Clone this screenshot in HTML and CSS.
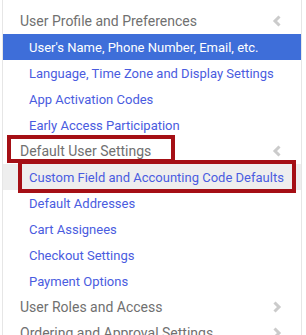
FILE: index.html
```html
<!DOCTYPE html>
<html>
<head>
<meta charset="utf-8">
<link rel="stylesheet" href="styles.css">
</head>
<body>
<nav class="card">
  <div class="group">
    <div class="head"><span class="head-label">User Profile and Preferences</span>
      <svg class="chev" width="10" height="12" viewBox="0 0 10 12"><path d="M7.5 1.5 L3 6 L7.5 10.5" fill="none" stroke="#cbcbcb" stroke-width="3"/></svg>
    </div>
    <a class="item active">User's Name, Phone Number, Email, etc.</a>
    <a class="item">Language, Time Zone and Display Settings</a>
    <a class="item">App Activation Codes</a>
    <a class="item">Early Access Participation</a>
  </div>
  <div class="group">
    <div class="head"><span class="head-label">Default User Settings</span>
      <span class="mark mark-head"></span>
      <svg class="chev" width="10" height="12" viewBox="0 0 10 12"><path d="M7.5 1.5 L3 6 L7.5 10.5" fill="none" stroke="#cbcbcb" stroke-width="3"/></svg>
    </div>
    <a class="item hover">Custom Field and Accounting Code Defaults<span class="mark mark-item"></span></a>
    <a class="item">Default Addresses</a>
    <a class="item">Cart Assignees</a>
    <a class="item">Checkout Settings</a>
    <a class="item">Payment Options</a>
  </div>
  <div class="head"><span class="head-label">User Roles and Access</span>
    <svg class="chev" width="10" height="12" viewBox="0 0 10 12"><path d="M2.5 1.5 L7 6 L2.5 10.5" fill="none" stroke="#cbcbcb" stroke-width="3"/></svg>
  </div>
  <div class="head"><span class="head-label">Ordering and Approval Settings</span>
    <svg class="chev" width="10" height="12" viewBox="0 0 10 12"><path d="M2.5 1.5 L7 6 L2.5 10.5" fill="none" stroke="#cbcbcb" stroke-width="3"/></svg>
  </div>
</nav>
</body>
</html>
```
FILE: styles.css
```css
html, body {
  margin: 0;
  padding: 0;
  background: #ffffff;
  overflow: hidden;
}
body {
  font-family: Roboto, "Liberation Sans", sans-serif;
}
.card {
  margin-left: 2px;
  width: 298px;
  padding-top: 8px;
  border-left: 1px solid #e6e6e6;
  border-right: 1px solid #e6e6e6;
  display: flex;
  flex-direction: column;
  min-height: 400px;
}
.group {
  display: flex;
  flex-direction: column;
}
.head {
  position: relative;
  height: 26px;
  display: flex;
  align-items: center;
  justify-content: space-between;
  padding: 0 19px 0 17px;
  font-size: 14px;
  color: #707070;
}
.head-label {
  position: relative;
  z-index: 1;
}
.chev {
  display: block;
}
.item {
  position: relative;
  height: 26px;
  display: flex;
  align-items: center;
  padding-left: 26px;
  font-size: 13px;
  color: #4a5ce0;
  text-decoration: none;
}
.item.active {
  background: #3e6ed9;
  color: #ffffff;
}
.item.hover {
  background: #eeeeee;
}
.mark {
  position: absolute;
  border: 4px solid #a50f15;
  box-sizing: border-box;
  pointer-events: none;
}
.mark-head {
  left: 4px;
  top: -3px;
  width: 168px;
  height: 28px;
}
.mark-item {
  left: 15px;
  top: -4px;
  width: 278px;
  height: 33px;
}
```
